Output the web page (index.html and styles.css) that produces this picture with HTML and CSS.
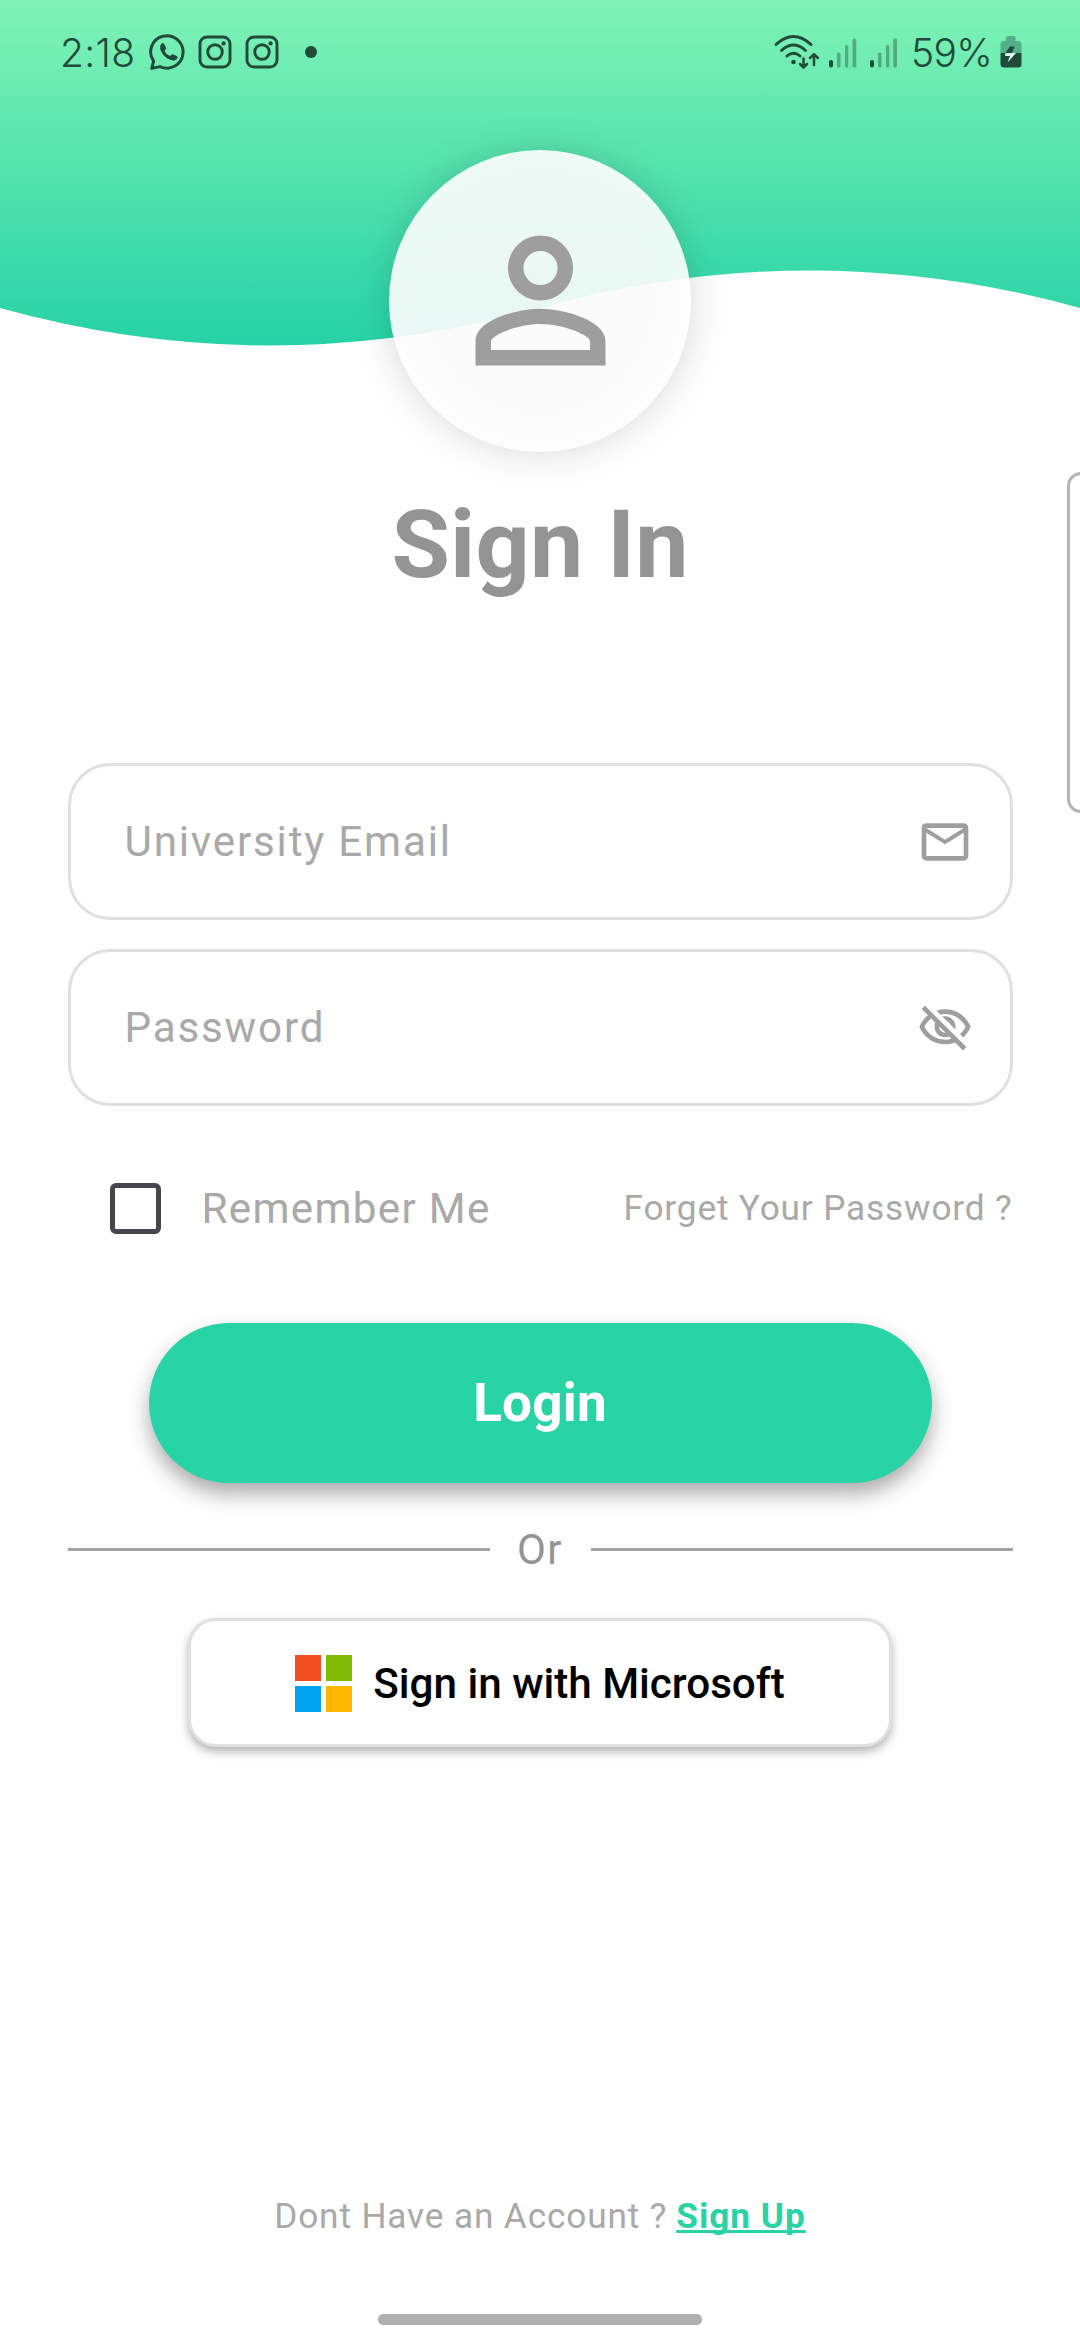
FILE: index.html
```html
<!DOCTYPE html>
<html lang="en">
<head>
<meta charset="utf-8">
<title>Sign In</title>
<link rel="stylesheet" href="styles.css">
</head>
<body>
<main class="screen">
  <header class="hero">
    <svg class="wave" width="1080" height="360" viewBox="0 0 1080 360">
      <defs>
        <linearGradient id="sky" gradientUnits="userSpaceOnUse" x1="0" y1="0" x2="0" y2="346">
          <stop offset="0" stop-color="#80f3b6"/>
          <stop offset="1" stop-color="#26d2a6"/>
        </linearGradient>
      </defs>
      <path fill="url(#sky)" d="M0 0H1080V308Q810 233 540 308Q270 383 0 308Z"/>
    </svg>
    <div class="status">
      <div class="status-left">
        <span class="clock">2:18</span>
        <svg width="38" height="38" viewBox="0 0 38 38">
          <path fill="none" stroke="#214a38" stroke-width="3" stroke-linejoin="round" d="M4.600 28.200A16.200 16.200 0 1 1 11 33.600L2.800 35.400Z"/>
          <path fill="#214a38" d="M12.600 10.600c.7-.7 1.900-.7 2.400.2l1.900 3.500c.4.8.2 1.600-.4 2.300l-1 1.200c1.200 2.500 3 4.200 5.500 5.300l1.300-1.200c.7-.6 1.500-.7 2.200-.4l3.200 1.500c.9.5 1.100 1.500.5 2.400-1.300 2-3.700 2.600-6.200 1.700-5-1.800-8.600-5.400-10.300-9.700-1-2.500-.8-5.200.9-6.800z"/>
        </svg>
        <svg class="insta" width="34" height="34" viewBox="0 0 34 34">
          <g fill="none" stroke="#214a38" stroke-width="2.900"><rect x="2" y="2" width="30" height="30" rx="7"/><circle cx="17" cy="17" r="7.300"/></g>
          <circle cx="25.600" cy="8.400" r="2.100" fill="#214a38"/>
        </svg>
        <svg class="insta" width="34" height="34" viewBox="0 0 34 34">
          <g fill="none" stroke="#214a38" stroke-width="2.900"><rect x="2" y="2" width="30" height="30" rx="7"/><circle cx="17" cy="17" r="7.300"/></g>
          <circle cx="25.600" cy="8.400" r="2.100" fill="#214a38"/>
        </svg>
        <span class="dot"></span>
      </div>
      <div class="status-right">
        <svg width="124" height="36" viewBox="0 0 124 36">
          <g fill="none" stroke="#214a38" stroke-width="2.800" stroke-linecap="round">
            <path d="M2 10.500Q19.500-5.500 37 10.500M7.500 16.500Q19.500 5.500 31.500 16.500M13 22Q19.500 16.500 26 22"/>
            <path d="M29.500 24.500V33M26 30L29.500 33.500L33 30M40 31V20.500M36 24L40 20.200L44 24" stroke-linejoin="round" stroke-width="2.500"/>
          </g>
          <circle cx="19.500" cy="28" r="2.300" fill="#214a38"/>
          <g fill="#214a38">
            <rect x="55" y="26" width="4" height="7.500" rx="2"/><rect x="96" y="26" width="4" height="7.500" rx="2"/>
            <g opacity=".4">
              <rect x="63" y="18.500" width="3.500" height="15" rx="1.500"/><rect x="71" y="11" width="3.300" height="22.500" rx="1.500"/><rect x="78.500" y="4.500" width="3.800" height="29" rx="1.500"/>
              <rect x="104" y="18.500" width="3.500" height="15" rx="1.500"/><rect x="112" y="11" width="3.300" height="22.500" rx="1.500"/><rect x="119.200" y="4.500" width="3.800" height="29" rx="1.500"/>
            </g>
          </g>
        </svg>
        <span class="percent">59%</span>
        <svg width="22" height="32" viewBox="0 0 22 32">
          <path fill="#54ae87" d="M6 5V2Q6 0 8 0H13.500Q15.500 0 15.500 2V5H18Q21.500 5 21.500 8.500V17H.5V8.500Q.5 5 4 5Z"/>
          <path fill="#214a38" d="M.5 17H21.500V28Q21.500 31.500 18 31.500H4Q.5 31.500 .5 28Z"/>
          <path fill="#214a38" d="M10 10.500H14.500L12 17H5.500Z"/>
          <path fill="#d8f8e8" d="M5.500 17H16L7.500 26.500L10 20H5Z"/>
        </svg>
      </div>
    </div>
    <div class="avatar">
      <svg width="195" height="195" viewBox="0 0 24 24"><path fill="#9e9e9e" d="M12 5.900c1.160 0 2.100.94 2.100 2.100s-.94 2.100-2.100 2.100S9.900 9.160 9.900 8s.94-2.100 2.100-2.100m0 9c2.970 0 6.100 1.460 6.100 2.100v1.100H5.900V17c0-.64 3.130-2.100 6.100-2.100M12 4C9.790 4 8 5.790 8 8s1.790 4 4 4 4-1.790 4-4-1.790-4-4-4zm0 9c-2.670 0-8 1.340-8 4v3h16v-3c0-2.660-5.330-4-8-4z"/></svg>
    </div>
  </header>

  <h1 class="title">Sign In</h1>

  <form class="form">
    <div class="field">
      <span>University Email</span>
      <svg width="56" height="56" viewBox="0 0 24 24"><path fill="#9e9e9e" d="M22 6c0-1.100-.9-2-2-2H4c-1.100 0-2 .9-2 2v12c0 1.100.9 2 2 2h16c1.100 0 2-.9 2-2V6zm-2 0l-8 5-8-5h16zm0 12H4V8l8 5 8-5v10z"/></svg>
    </div>
    <div class="field">
      <span>Password</span>
      <svg width="56" height="56" viewBox="0 0 24 24"><path fill="#9e9e9e" d="M12 6c3.790 0 7.170 2.130 8.820 5.500-.59 1.220-1.420 2.270-2.410 3.120l1.410 1.410c1.390-1.230 2.490-2.770 3.180-4.530C21.270 7.110 17 4 12 4c-1.270 0-2.490.2-3.640.57l1.650 1.650C10.660 6.090 11.320 6 12 6zm-1.070 1.140L13 9.210c.57.25 1.030.71 1.280 1.280l2.070 2.070c.08-.34.14-.7.14-1.070C16.500 9.010 14.480 7 12 7c-.37 0-.72.05-1.070.14zM2.010 3.870l2.680 2.680C3.060 7.830 1.770 9.530 1 11.500 2.730 15.890 7 19 12 19c1.520 0 2.980-.29 4.320-.82l3.420 3.420 1.410-1.410L3.420 2.450 2.010 3.870zm7.500 7.500l2.610 2.610c-.04.01-.08.02-.12.02-1.380 0-2.500-1.120-2.500-2.500 0-.05.01-.08.01-.13zm-3.400-3.400l1.750 1.750c-.23.55-.36 1.150-.36 1.780 0 2.480 2.020 4.500 4.500 4.500.63 0 1.230-.13 1.770-.36l.98.98c-.88.24-1.800.38-2.750.38-3.790 0-7.170-2.130-8.820-5.500.7-1.430 1.720-2.610 2.930-3.530z"/></svg>
    </div>
    <div class="options">
      <span class="checkbox"></span>
      <span class="remember">Remember Me</span>
      <a class="forgot">Forget Your Password ?</a>
    </div>
    <div class="login">Login</div>
    <div class="divider"><i></i><span>Or</span><i></i></div>
    <div class="microsoft">
      <svg width="57" height="57" viewBox="0 0 57 57">
        <path fill="#f25022" d="M0 0h26v26H0z"/><path fill="#80ba01" d="M31 0h26v26H31z"/>
        <path fill="#02a4ef" d="M0 31h26v26H0z"/><path fill="#ffb902" d="M31 31h26v26H31z"/>
      </svg>
      <span>Sign in with Microsoft</span>
    </div>
  </form>

  <footer class="signup"><span>Dont Have an Account ?</span><a>Sign Up</a></footer>
  <div class="home-bar"></div>
  <div class="edge-handle"></div>
</main>
</body>
</html>
```

FILE: styles.css
```css
* { box-sizing: border-box; }
body { margin: 0; background: #fefefe; font-family: Roboto, sans-serif; }
svg { display: block; flex: none; }
.screen { position: relative; width: 1080px; height: 2340px; overflow: hidden; display: flex; flex-direction: column; align-items: center; }

.hero { position: relative; width: 1080px; height: 452px; display: flex; flex-direction: column; align-items: center; }
.wave { position: absolute; left: 0; top: 0; }
.status { position: relative; width: 1080px; height: 104px; padding: 0 58px 0 60px; display: flex; justify-content: space-between; color: #214a38; font-family: Inter, sans-serif; font-weight: 350; font-size: 39px; }
.status-left, .status-right { display: flex; align-items: center; }
.clock { width: 89px; letter-spacing: .3px; }
.insta { margin-left: 11px; }
.insta + .insta { margin-left: 13px; }
.dot { width: 12px; height: 12px; border-radius: 50%; background: #214a38; margin-left: 26px; }
.percent { margin: 0 8px 0 13px; letter-spacing: -.7px; }

.avatar { position: relative; z-index: 0; width: 302px; height: 302px; margin-top: 46px; padding-bottom: 2px; border-radius: 50%; display: flex; align-items: center; justify-content: center; }
.avatar::before, .avatar::after { content: ""; position: absolute; inset: 0; border-radius: 50%; }
.avatar::before { z-index: -2; background: rgba(0, 0, 0, .15); filter: blur(17px); }
.avatar::after { z-index: -1; background: rgba(255, 255, 255, .9); }

.title { margin: 38px 0 0; height: 110px; line-height: 110px; font-size: 95px; font-weight: 700; letter-spacing: .2px; color: #949494; }

.form { margin-top: 163px; width: 945px; display: flex; flex-direction: column; align-items: center; }
.field { width: 945px; height: 157px; border: 3px solid #e0e0e0; border-radius: 42px; padding: 0 36.500px 0 54px; display: flex; align-items: center; justify-content: space-between; font-size: 42.200px; letter-spacing: 1.800px; color: #a9a9a9; }
.field + .field { margin-top: 29px; }
.options { width: 945px; height: 52px; margin-top: 76px; padding-left: 42px; display: flex; align-items: center; color: #a9a9a9; }
.checkbox { width: 51px; height: 51px; border: 5.600px solid #49454f; border-radius: 6px; }
.remember { margin-left: 41px; font-size: 42.200px; letter-spacing: 1.300px; }
.forgot { margin-left: auto; font-size: 35.200px; letter-spacing: .85px; }
.login { width: 783px; height: 160px; margin-top: 89px; border-radius: 80px; background: #28d3a6; box-shadow: 0 11px 20px rgba(0, 0, 0, .32); display: flex; align-items: center; justify-content: center; color: #fff; font-size: 53px; font-weight: 700; letter-spacing: .2px; }
.divider { width: 945px; height: 60px; margin-top: 36px; display: flex; align-items: center; justify-content: space-between; font-size: 42px; letter-spacing: 1.400px; color: #949494; }
.divider i { width: 422px; height: 3px; background: #a7a3a3; }
.microsoft { width: 704px; height: 129px; margin-top: 39px; padding-top: 1px; border: 3px solid #e0e0e0; border-radius: 28px; background: #fefefe; box-shadow: 0 5px 9px rgba(0, 0, 0, .28); display: flex; align-items: center; justify-content: center; gap: 21px; font-size: 42.200px; font-weight: 500; color: #000; }

.signup { margin-top: auto; height: 50px; display: flex; align-items: center; gap: 9px; font-size: 35.200px; letter-spacing: .87px; color: #a9a9a9; }
.signup a { font-weight: 700; color: #28d3a6; text-decoration: underline; text-decoration-thickness: 3px; text-decoration-skip-ink: none; letter-spacing: 1px; }
.home-bar { width: 324px; height: 11px; margin: 73px 0 15px; border-radius: 5.500px; background: #afafaf; }
.edge-handle { position: absolute; left: 1067px; top: 472px; width: 30px; height: 341px; border: 3px solid #b4b4b4; border-radius: 14px; }
```
